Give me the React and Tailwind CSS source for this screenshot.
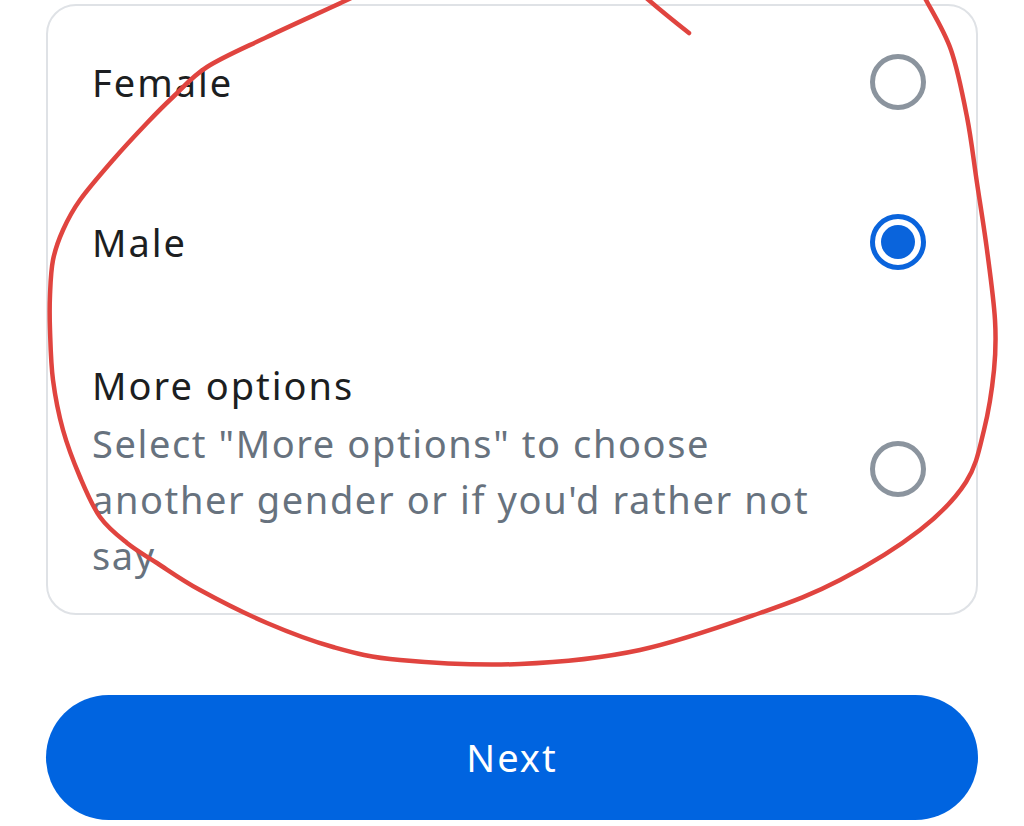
import { useState } from "react";

const loop = [
  [365, -10], [347, 0], [267, 37], [207, 67], [173, 97], [147, 123], [113, 160],
  [80, 200], [63, 230], [53, 260], [50, 295], [50, 330], [53, 380], [63, 430],
  [80, 477], [100, 517], [127, 543], [157, 563], [200, 590], [267, 623], [333, 647],
  [400, 660], [520, 664], [640, 650], [760, 613], [840, 580], [920, 530], [966, 482],
  [984, 430], [994, 370], [995, 320], [987, 250], [977, 183], [967, 117], [951, 50],
  [926, 0], [920, -10],
];

// catmull-rom through the traced points
function smoothPath(pts) {
  let d = `M${pts[0][0]},${pts[0][1]}`;
  for (let i = 0; i < pts.length - 1; i++) {
    const p0 = pts[i - 1] || pts[i];
    const p1 = pts[i];
    const p2 = pts[i + 1];
    const p3 = pts[i + 2] || p2;
    const c1 = [p1[0] + (p2[0] - p0[0]) / 6, p1[1] + (p2[1] - p0[1]) / 6];
    const c2 = [p2[0] - (p3[0] - p1[0]) / 6, p2[1] - (p3[1] - p1[1]) / 6];
    d += ` C${c1[0]},${c1[1]} ${c2[0]},${c2[1]} ${p2[0]},${p2[1]}`;
  }
  return d;
}

function Radio({ checked }) {
  return checked ? (
    <span className="flex h-[56px] w-[56px] shrink-0 items-center justify-center rounded-full border-[5px] border-[#0a64dc]">
      <span className="h-[34px] w-[34px] rounded-full bg-[#0a64dc]" />
    </span>
  ) : (
    <span className="h-[56px] w-[56px] shrink-0 rounded-full border-[5px] border-[#8b949e]" />
  );
}

export default function App() {
  const [gender, setGender] = useState("male");

  return (
    <div
      className="relative h-[826px] w-[1024px] overflow-hidden bg-white px-[46px] pt-[4px]"
      style={{ fontFamily: '"Noto Sans", "Open Sans", sans-serif' }}
    >
      <div className="rounded-[30px] border-2 border-[#dfe2e6] pl-[44px] pr-[50px] pt-[46px] pb-[30px]">
        <button
          type="button"
          onClick={() => setGender("female")}
          className="flex w-full items-center justify-between text-left"
        >
          <span className="text-[38px] leading-[60px] tracking-[2px] text-[#1c1e21]">Female</span>
          <Radio checked={gender === "female"} />
        </button>
        <button
          type="button"
          onClick={() => setGender("male")}
          className="mt-[100px] flex w-full items-center justify-between text-left"
        >
          <span className="text-[38px] leading-[60px] tracking-[2px] text-[#1c1e21]">Male</span>
          <Radio checked={gender === "male"} />
        </button>
        <button
          type="button"
          onClick={() => setGender("more")}
          className="mt-[83px] flex w-full items-center justify-between text-left"
        >
          <span className="block w-[760px]">
            <span className="block text-[38px] leading-[60px] tracking-[2px] text-[#1c1e21]">More options</span>
            <span className="block text-[38px] leading-[56px] tracking-[1.6px] text-[#67727e]">
              Select "More options" to choose another gender or if you'd rather not say
            </span>
          </span>
          <Radio checked={gender === "more"} />
        </button>
      </div>

      <button
        type="button"
        className="mt-[80px] flex h-[125px] w-full items-center justify-center rounded-full bg-[#0064e0] text-[38px] tracking-[2px] text-white"
      >
        Next
      </button>

      <svg
        className="pointer-events-none absolute left-0 top-0"
        width="1024"
        height="826"
        viewBox="0 0 1024 826"
        fill="none"
      >
        <path d={smoothPath(loop)} stroke="#e0443f" strokeWidth="4.5" strokeLinecap="round" strokeLinejoin="round" />
        <path d="M644,-4 C660,10 675,22 689,33" stroke="#e0443f" strokeWidth="4.5" strokeLinecap="round" />
      </svg>
    </div>
  );
}
